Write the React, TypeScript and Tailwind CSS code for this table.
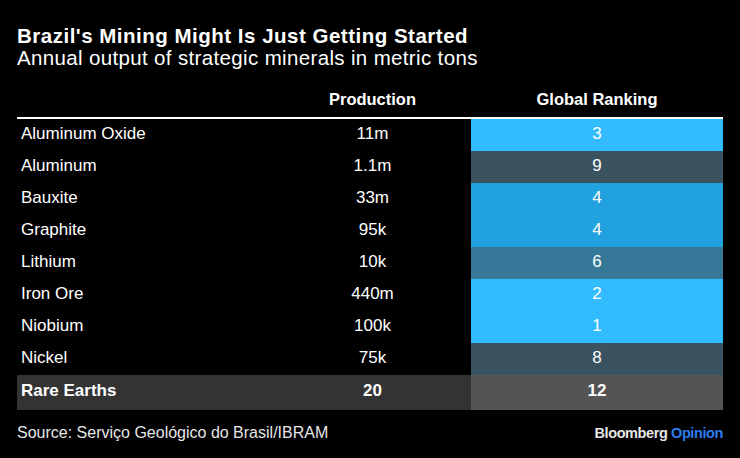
import React from "react";

type Row = { name: string; prod: string; rank: string; bg: string };

const rows: Row[] = [
  { name: "Aluminum Oxide", prod: "11m", rank: "3", bg: "bg-[#33bbff]" },
  { name: "Aluminum", prod: "1.1m", rank: "9", bg: "bg-[#3b5360]" },
  { name: "Bauxite", prod: "33m", rank: "4", bg: "bg-[#21a1dd]" },
  { name: "Graphite", prod: "95k", rank: "4", bg: "bg-[#21a1dd]" },
  { name: "Lithium", prod: "10k", rank: "6", bg: "bg-[#367898]" },
  { name: "Iron Ore", prod: "440m", rank: "2", bg: "bg-[#33bbff]" },
  { name: "Niobium", prod: "100k", rank: "1", bg: "bg-[#33bbff]" },
  { name: "Nickel", prod: "75k", rank: "8", bg: "bg-[#3b5360]" },
];

export default function App() {
  return (
    <div className="w-[740px] h-[458px] bg-black text-white px-[17px] pt-[25px] font-['Liberation_Sans',Arial,sans-serif] overflow-hidden">
      <div className="text-[20.5px] leading-[22px] font-bold tracking-[0.5px]">
        Brazil's Mining Might Is Just Getting Started
      </div>
      <div className="text-[20.5px] leading-[22px] tracking-[0.35px]">
        Annual output of strategic minerals in metric tons
      </div>

      <div className="flex pt-[20px] pb-[8px] border-b-2 border-white text-[16.5px] leading-[20px] font-bold">
        <div className="w-[257px]" />
        <div className="w-[197px] text-center">Production</div>
        <div className="flex-1 text-center">Global Ranking</div>
      </div>

      <div className="flex flex-col">
        {rows.map((r, i) => (
          <div key={i} className="flex h-[32px] text-[17px] leading-[30px]">
            <div className="w-[257px] pl-[4px]">{r.name}</div>
            <div className="w-[197px] text-center">{r.prod}</div>
            <div className={`flex-1 text-center ${r.bg}`}>{r.rank}</div>
          </div>
        ))}
        <div className="flex h-[35px] text-[17px] leading-[32px] font-bold">
          <div className="w-[454px] flex bg-[#333333]">
            <div className="w-[257px] pl-[4px]">Rare Earths</div>
            <div className="w-[197px] text-center">20</div>
          </div>
          <div className="flex-1 text-center bg-[#545454]">12</div>
        </div>
      </div>

      <div className="flex justify-between items-baseline mt-[13px]">
        <div className="text-[16px] leading-[20px] text-[#e6e6e6]">
          Source: Serviço Geológico do Brasil/IBRAM
        </div>
        <div className="text-[14.5px] leading-[20px] font-bold tracking-[-0.4px] text-[#e6e6e6]">
          Bloomberg <span className="text-[#2f7cf0]">Opinion</span>
        </div>
      </div>
    </div>
  );
}
